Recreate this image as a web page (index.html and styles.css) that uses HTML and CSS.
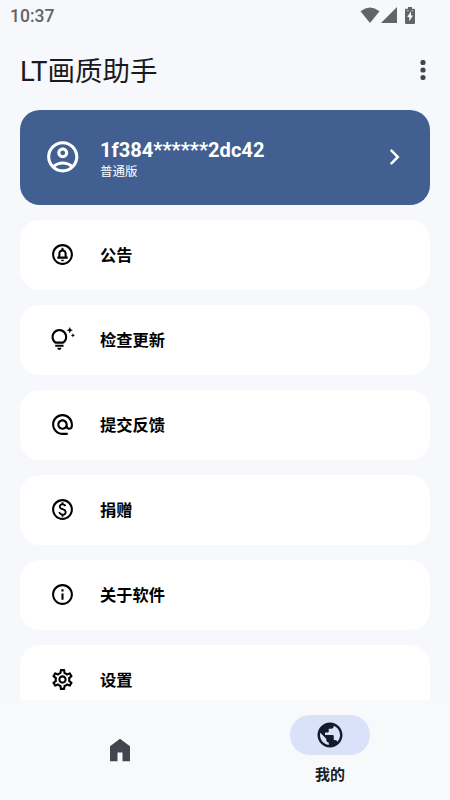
FILE: index.html
```html
<!DOCTYPE html>
<html lang="zh-CN">
<head>
<meta charset="utf-8">
<title>LT画质助手</title>
<link rel="stylesheet" href="styles.css">
</head>
<body>
<div class="app">
  <div class="status">
    <span class="time">10:37</span>
    <svg class="wifi" viewBox="0 0 20 16"><path d="M10 16L.5 4.2Q10-3.2 19.500 4.200z"/></svg>
    <svg class="signal" viewBox="0 0 16 16"><path d="M0 16L16 0v16z"/></svg>
    <svg class="battery" viewBox="0 0 10 17"><path fill-rule="evenodd" d="M3 0h4v1.700h2q1 0 1 1V16q0 1-1 1H1q-1 0-1-1V2.700q0-1 1-1h2zM6 4.300L2.200 10h2v4.200L8 8.500H6z"/><path class="battery-gap" d="M1.500 3.200h2.300v1H1.500zm4.800 0h2.200v1H6.300z"/></svg>
  </div>
  <header class="toolbar">
    <h1>LT画质助手</h1>
    <svg class="more" viewBox="0 0 6 20"><circle cx="3" cy="2.500" r="2.600"/><circle cx="3" cy="10" r="2.600"/><circle cx="3" cy="17.500" r="2.600"/></svg>
  </header>
  <main class="list">
    <section class="profile">
      <svg class="avatar" viewBox="0 0 24 24"><path d="M12 2C6.480 2 2 6.480 2 12s4.480 10 10 10 10-4.480 10-10S17.520 2 12 2zM7.350 18.500C8.660 17.560 10.260 17 12 17s3.340.56 4.650 1.500C15.340 19.440 13.740 20 12 20s-3.340-.56-4.650-1.500zm10.790-1.380C16.450 15.800 14.320 15 12 15s-4.450.8-6.140 2.120C4.700 15.730 4 13.950 4 12c0-4.420 3.580-8 8-8s8 3.580 8 8c0 1.950-.7 3.730-1.860 5.120zM12 6c-1.930 0-3.500 1.570-3.500 3.500S10.070 13 12 13s3.500-1.570 3.500-3.500S13.930 6 12 6zm0 5c-.83 0-1.500-.67-1.500-1.500S11.170 8 12 8s1.500.67 1.500 1.500S12.830 11 12 11z"/></svg>
      <div class="account">
        <div class="uid">1f384******2dc42</div>
        <div class="plan">普通版</div>
      </div>
      <svg class="chevron" viewBox="0 0 10 16"><path d="M1.500 1.700L7.800 8l-6.300 6.300"/></svg>
    </section>
    <div class="card">
      <svg class="icon" viewBox="0 0 24 24"><path d="M12 18.500c.83 0 1.500-.67 1.500-1.500h-3c0 .83.67 1.500 1.500 1.500zM12 2C6.480 2 2 6.480 2 12s4.480 10 10 10 10-4.480 10-10S17.520 2 12 2zm0 18c-4.410 0-8-3.590-8-8s3.590-8 8-8 8 3.590 8 8-3.590 8-8 8zm4-6v-3c0-1.860-1.280-3.410-3-3.860V6.500c0-.55-.45-1-1-1s-1 .45-1 1v.64c-1.720.45-3 2-3 3.860v3H7v2h10v-2h-1zm-2 0h-4v-3c0-1.100.9-2 2-2s2 .9 2 2v3z"/></svg>
      <span>公告</span>
    </div>
    <div class="card">
      <svg class="icon" viewBox="0 0 24 24"><path d="M7 20h4c0 1.100-.9 2-2 2s-2-.9-2-2zm-2-1h8v-2H5v2zm11.500-9.500c0 3.820-2.660 5.860-3.770 6.500H5.270c-1.110-.64-3.770-2.680-3.770-6.500C1.500 5.360 4.860 2 9 2s7.500 3.360 7.500 7.500zm-2 0C14.500 6.470 12.030 4 9 4S3.500 6.470 3.500 9.500c0 2.470 1.490 3.890 2.350 4.500h6.300c.86-.61 2.350-2.030 2.350-4.500zm6.870-2.130L20 8l1.370.63L22 10l.63-1.370L24 8l-1.370-.63L22 6l-.63 1.370zM19 6l.94-2.060L22 3l-2.060-.94L19 0l-.94 2.060L16 3l2.060.94L19 6z"/></svg>
      <span>检查更新</span>
    </div>
    <div class="card">
      <svg class="icon" viewBox="0 0 24 24"><path d="M12 2C6.480 2 2 6.480 2 12s4.480 10 10 10h5v-2h-5c-4.340 0-8-3.660-8-8s3.660-8 8-8 8 3.660 8 8v1.430c0 .79-.71 1.570-1.500 1.570s-1.500-.78-1.500-1.570V12c0-2.760-2.240-5-5-5s-5 2.240-5 5 2.240 5 5 5c1.380 0 2.640-.56 3.540-1.470.65.89 1.770 1.470 2.960 1.470 1.970 0 3.500-1.600 3.500-3.570V12c0-5.520-4.480-10-10-10zm0 13c-1.660 0-3-1.340-3-3s1.340-3 3-3 3 1.340 3 3-1.340 3-3 3z"/></svg>
      <span>提交反馈</span>
    </div>
    <div class="card">
      <svg class="icon" viewBox="0 0 24 24"><path d="M12 2C6.480 2 2 6.480 2 12s4.480 10 10 10 10-4.480 10-10S17.520 2 12 2zm0 18c-4.410 0-8-3.590-8-8s3.590-8 8-8 8 3.590 8 8-3.590 8-8 8zm.89-8.900c-1.780-.59-2.640-.96-2.640-1.900 0-1.020 1.110-1.390 1.810-1.390 1.310 0 1.790.99 1.900 1.340l1.580-.67c-.15-.44-.82-1.910-2.660-2.230V5h-1.750v1.260c-2.600.56-2.620 2.850-2.620 2.960 0 2.270 2.250 2.910 3.350 3.310 1.580.56 2.280 1.070 2.280 2.030 0 1.130-1.050 1.610-1.980 1.610-1.820 0-2.340-1.870-2.400-2.090l-1.660.67c.63 2.190 2.280 2.780 3.020 2.960V19h1.750v-1.240c.52-.09 3.020-.59 3.020-3.220.01-1.390-.6-2.610-3-3.440z"/></svg>
      <span>捐赠</span>
    </div>
    <div class="card">
      <svg class="icon" viewBox="0 0 24 24"><path d="M11 7h2v2h-2zm0 4h2v6h-2zm1-9C6.480 2 2 6.480 2 12s4.480 10 10 10 10-4.480 10-10S17.520 2 12 2zm0 18c-4.410 0-8-3.590-8-8s3.590-8 8-8 8 3.590 8 8-3.590 8-8 8z"/></svg>
      <span>关于软件</span>
    </div>
    <div class="card">
      <svg class="icon" viewBox="0 0 24 24"><path d="M19.430 12.980c.04-.32.07-.64.07-.98s-.03-.66-.07-.98l2.110-1.650c.19-.15.24-.42.12-.64l-2-3.460c-.12-.22-.39-.3-.61-.22l-2.490 1c-.52-.4-1.080-.73-1.690-.98l-.38-2.650C14.460 2.180 14.250 2 14 2h-4c-.25 0-.46.18-.49.42l-.38 2.650c-.61.25-1.170.59-1.690.98l-2.490-1c-.23-.09-.49 0-.61.22l-2 3.460c-.13.22-.07.49.12.64l2.110 1.650c-.04.32-.07.65-.07.98s.03.66.07.98l-2.110 1.650c-.19.15-.24.42-.12.64l2 3.460c.12.22.39.3.61.22l2.490-1c.52.4 1.080.73 1.690.98l.38 2.650c.03.24.24.42.49.42h4c.25 0 .46-.18.49-.42l.38-2.650c.61-.25 1.170-.59 1.690-.98l2.490 1c.23.09.49 0 .61-.22l2-3.460c.12-.22.07-.49-.12-.64l-2.110-1.650zm-1.980-1.710c.04.31.05.52.05.73s-.02.43-.05.73l-.14 1.130.89.7 1.080.84-.7 1.210-1.270-.51-1.040-.42-.9.68c-.43.32-.84.56-1.250.73l-1.060.43-.16 1.130-.2 1.350h-1.400l-.19-1.350-.16-1.130-1.060-.43c-.43-.18-.83-.41-1.230-.71l-.91-.7-1.060.43-1.270.51-.7-1.210 1.080-.84.89-.7-.14-1.130c-.03-.31-.05-.54-.05-.74s.02-.43.05-.73l.14-1.130-.89-.7-1.080-.84.7-1.210 1.270.51 1.040.42.9-.68c.43-.32.84-.56 1.250-.73l1.060-.43.16-1.130.2-1.350h1.390l.19 1.350.16 1.130 1.060.43c.43.18.83.41 1.230.71l.91.7 1.060-.43 1.270-.51.7 1.210-1.070.85-.89.7.14 1.130zM12 8c-2.210 0-4 1.790-4 4s1.790 4 4 4 4-1.790 4-4-1.790-4-4-4zm0 6c-1.100 0-2-.9-2-2s.9-2 2-2 2 .9 2 2-.9 2-2 2z"/></svg>
      <span>设置</span>
    </div>
  </main>
  <nav class="tabs">
    <div class="tab">
      <svg class="tab-icon" viewBox="0 0 24 24"><path d="M4 21V9l8-6 8 6v12h-6v-7h-4v7z"/></svg>
    </div>
    <div class="tab active">
      <div class="pill"><svg class="tab-icon" viewBox="0 0 24 24"><path d="M12 2C6.480 2 2 6.480 2 12s4.480 10 10 10 10-4.480 10-10S17.520 2 12 2zm-1 17.930c-3.950-.49-7-3.850-7-7.930 0-.62.08-1.210.21-1.790L9 15v1c0 1.100.9 2 2 2v1.930zm6.900-2.540c-.26-.81-1-1.390-1.900-1.390h-1v-3c0-.55-.45-1-1-1H8v-2h2c.55 0 1-.45 1-1V7h2c1.100 0 2-.9 2-2v-.41c2.930 1.190 5 4.060 5 7.410 0 2.080-.8 3.970-2.100 5.390z"/></svg></div>
      <span>我的</span>
    </div>
  </nav>
</div>
</body>
</html>
```
FILE: styles.css
```css
* { box-sizing: border-box; }
body { margin: 0; background: #f6f8fb; font-family: Roboto, "Noto Sans CJK SC", sans-serif; color: #000; }
svg { display: block; flex: none; }
.app { width: 450px; height: 800px; display: flex; flex-direction: column; overflow: hidden; }
.status { height: 30px; flex: none; display: flex; align-items: center; padding: 0 35px 0 10px; }
.status svg { fill: #636466; }
.status .battery-gap { fill: #b9babc; }
.time { margin-right: auto; padding-top: 2px; font-size: 17.5px; font-weight: 500; color: #636466; }
.wifi { width: 20px; height: 16px; }
.signal { width: 16px; height: 16px; margin-left: 1px; }
.battery { width: 10px; height: 17px; margin-left: 8px; }
.toolbar { height: 80px; flex: none; display: flex; align-items: center; justify-content: space-between; padding: 0 24.5px 0 20px; }
h1 { margin: 0; padding-top: 4px; font-size: 27.5px; line-height: 40px; font-weight: 400; color: #1b1b1f; }
.more { width: 6px; height: 20px; fill: #44464f; }
.list { flex: 1; min-height: 0; overflow: hidden; padding: 0 20px; display: flex; flex-direction: column; gap: 15px; }
.profile { height: 95px; flex: none; display: flex; align-items: center; padding: 0 30px 1px 24px; border-radius: 20px; background: #415f91; color: #fff; }
.avatar { width: 37.5px; height: 37.5px; fill: #fff; }
.account { flex: 1; margin-left: 18.5px; padding-top: 5px; }
.uid { font-size: 20.1px; line-height: 24px; font-weight: 700; }
.plan { font-size: 12.5px; line-height: 19px; }
.chevron { width: 10px; height: 16px; fill: none; stroke: #fff; stroke-width: 2.500; stroke-linecap: round; }
.card { height: 70px; flex: none; display: flex; align-items: center; gap: 25px; padding: 0 0 1px 30px; border-radius: 20px; background: #fff; font-size: 16.25px; font-weight: 700; }
.icon { width: 25px; height: 25px; }
.card span { padding-bottom: 1px; }
.tabs { height: 100px; flex: none; display: flex; padding: 0 15px; background: #f8f9fb; }
.tab { flex: 1; display: flex; flex-direction: column; align-items: center; justify-content: center; }
.tab-icon { width: 30px; height: 30px; fill: #44464f; }
.active { justify-content: flex-start; padding-top: 15px; font-size: 15px; line-height: 22px; font-weight: 700; color: #1b1b1f; gap: 9px; }
.pill { width: 80px; height: 40px; border-radius: 20px; background: #dae2f9; display: grid; place-items: center; }
.pill .tab-icon { fill: #131c2b; }
```
